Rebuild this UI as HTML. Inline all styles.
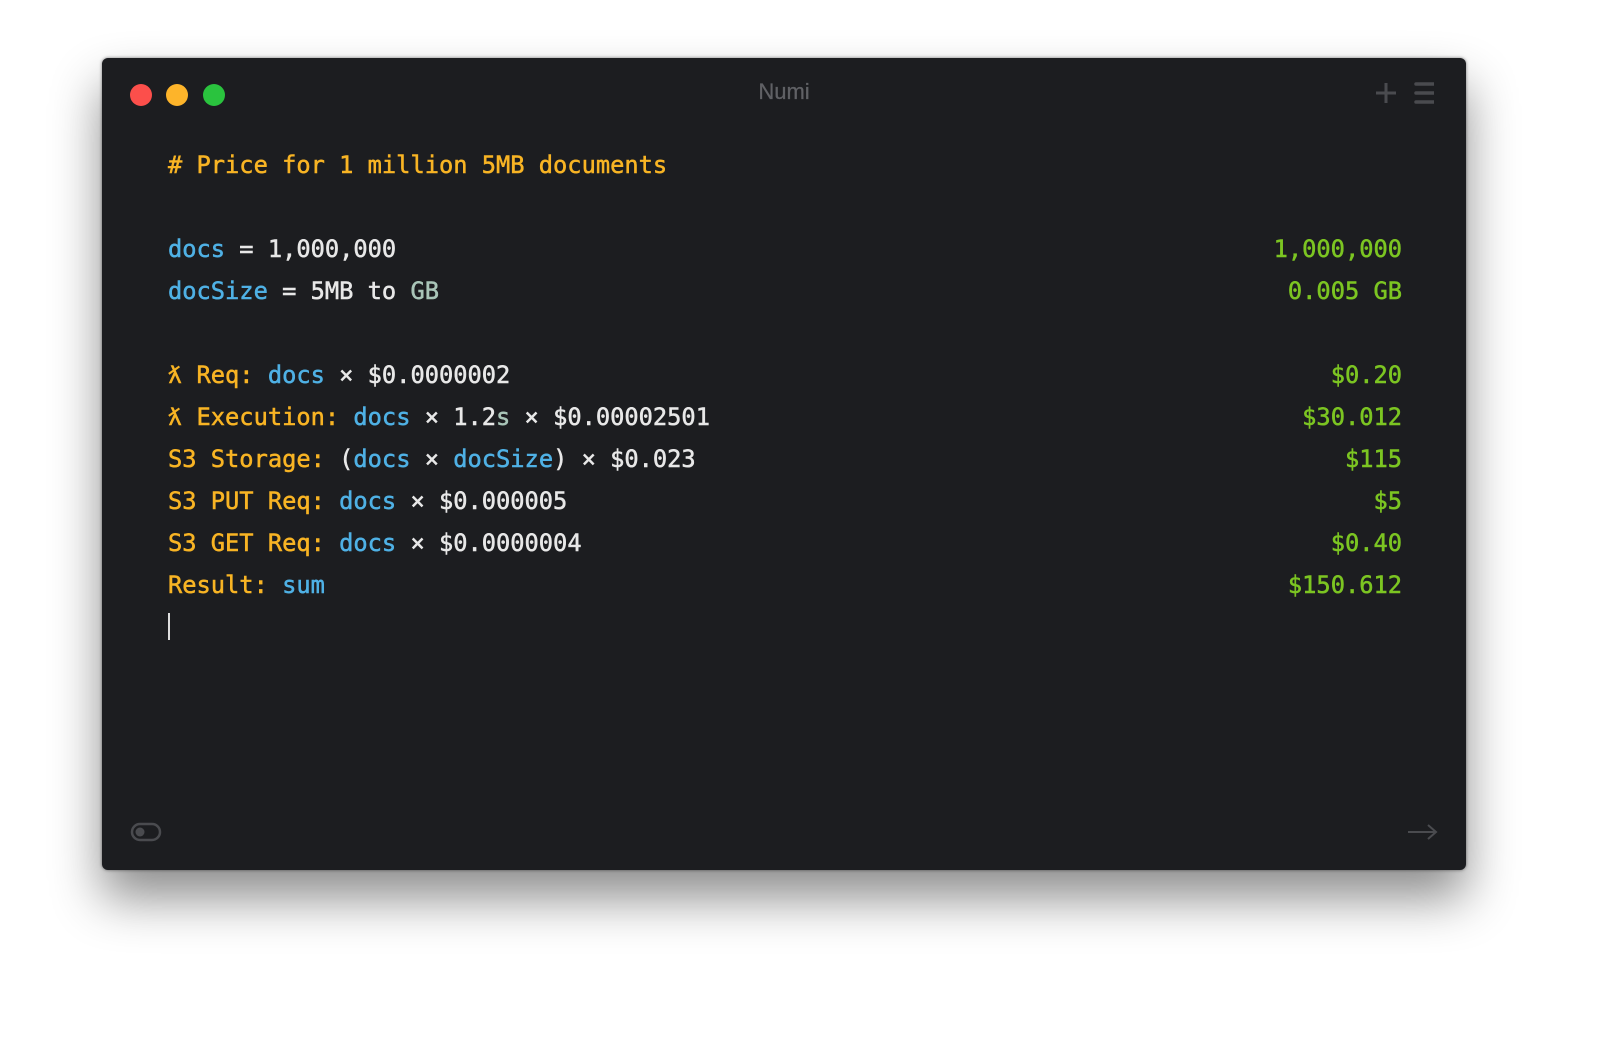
<!DOCTYPE html>
<html><head><style>
body{margin:0;width:1600px;height:1038px;background:#fff;overflow:hidden;position:relative;font-family:"DejaVu Sans Mono","Liberation Mono",monospace;}
.win{position:absolute;left:102px;top:58px;width:1364px;height:812px;background:#1c1d20;border-radius:6px;box-shadow:0 28px 50px rgba(0,0,0,0.45),0 0 3px rgba(0,0,0,0.5);}
.dot{position:absolute;top:84px;width:22px;height:22px;border-radius:50%;}
.title{position:absolute;left:0;width:1364px;top:21px;text-align:center;color:#606165;font:22px "Liberation Sans",sans-serif;-webkit-text-stroke:0.3px #606165;}
.line{position:absolute;left:168px;font-size:23.7px;white-space:pre;height:42px;line-height:42px;-webkit-text-stroke:0.5px currentColor;}
.r{position:absolute;right:198px;font-size:23.7px;white-space:pre;color:#7cc522;line-height:42px;-webkit-text-stroke:0.5px currentColor;}
.o{color:#f8b424}.b{color:#4fb1e5}.w{color:#e8e8e8}.g{color:#a9c5b8}
</style></head><body>
<div class="win">
<div class="title">Numi</div>
<svg style="position:absolute;left:1272px;top:23px" width="60" height="24"><path d="M12 2V22M2 12H22" stroke="#4a4b4f" stroke-width="3"/><path d="M42 3H60M42 12H60M42 21H60" stroke="#4a4b4f" stroke-width="3.5" stroke-linecap="round"/></svg>
<svg style="position:absolute;left:28px;top:764px" width="32" height="22"><rect x="2" y="2" width="28" height="16" rx="8" fill="none" stroke="#4a4b4f" stroke-width="2.5"/><circle cx="10" cy="10" r="4.5" fill="#4a4b4f"/></svg>
<svg style="position:absolute;left:1305px;top:765px" width="32" height="18"><path d="M1 9H29M21 2L29 9L21 16" fill="none" stroke="#4a4b4f" stroke-width="2"/></svg>
</div>
<div class="dot" style="left:130px;background:#fc4f4b"></div>
<div class="dot" style="left:166px;background:#fdb42a"></div>
<div class="dot" style="left:203px;background:#2ac33e"></div>
<div class="line o" style="top:144px"># Price for 1 million 5MB documents</div>
<div class="line" style="top:228px"><span class="b">docs</span><span class="w"> = 1,000,000</span></div>
<div class="line" style="top:270px"><span class="b">docSize</span><span class="w"> = 5MB </span><span class="w">to</span> <span class="g">GB</span></div>
<div class="line" style="top:354px"><span class="o">ƛ Req: </span><span class="b">docs</span><span class="w"> × $0.0000002</span></div>
<div class="line" style="top:396px"><span class="o">ƛ Execution: </span><span class="b">docs</span><span class="w"> × 1.2</span><span class="g">s</span><span class="w"> × $0.00002501</span></div>
<div class="line" style="top:438px"><span class="o">S3 Storage: </span><span class="w">(</span><span class="b">docs</span><span class="w"> × </span><span class="b">docSize</span><span class="w">) × $0.023</span></div>
<div class="line" style="top:480px"><span class="o">S3 PUT Req: </span><span class="b">docs</span><span class="w"> × $0.000005</span></div>
<div class="line" style="top:522px"><span class="o">S3 GET Req: </span><span class="b">docs</span><span class="w"> × $0.0000004</span></div>
<div class="line" style="top:564px"><span class="o">Result: </span><span class="b">sum</span></div>
<div style="position:absolute;left:168px;top:613px;width:2px;height:27px;background:#ddd"></div>
<div class="r" style="top:228px">1,000,000</div>
<div class="r" style="top:270px">0.005 GB</div>
<div class="r" style="top:354px">$0.20</div>
<div class="r" style="top:396px">$30.012</div>
<div class="r" style="top:438px">$115</div>
<div class="r" style="top:480px">$5</div>
<div class="r" style="top:522px">$0.40</div>
<div class="r" style="top:564px">$150.612</div>
</body></html>
